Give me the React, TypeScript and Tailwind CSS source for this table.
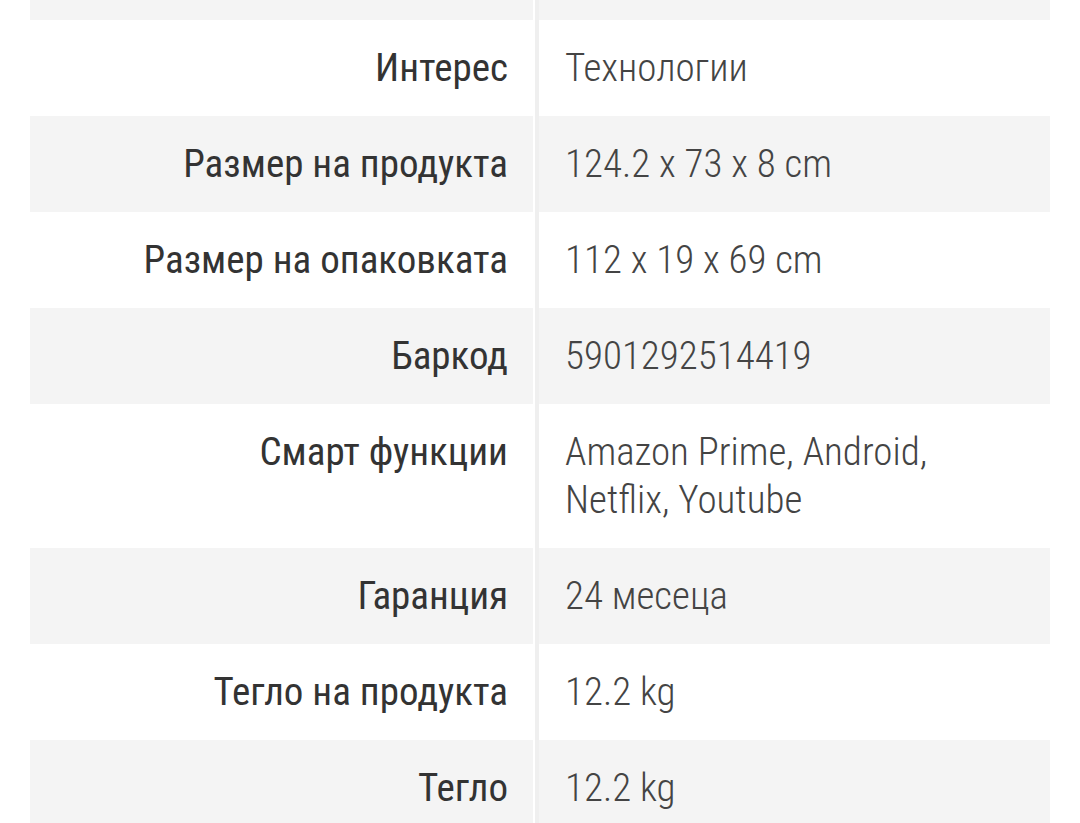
import React from "react";

type Spec = { label: string; value: string[] };

const specs: Spec[] = [
  { label: "Интерес", value: ["Технологии"] },
  { label: "Размер на продукта", value: ["124.2 x 73 x 8 cm"] },
  { label: "Размер на опаковката", value: ["112 x 19 x 69 cm"] },
  { label: "Баркод", value: ["5901292514419"] },
  { label: "Смарт функции", value: ["Amazon Prime, Android,", "Netflix, Youtube"] },
  { label: "Гаранция", value: ["24 месеца"] },
  { label: "Тегло на продукта", value: ["12.2 kg"] },
  { label: "Тегло", value: ["12.2 kg"] },
];

const SpecRow: React.FC<{ spec?: Spec; striped: boolean; top?: boolean }> = ({ spec, striped, top }) => {
  const bg = striped ? "bg-[#f4f4f4]" : "bg-white";
  return (
    <div className={`flex ${top ? "h-[20px]" : ""}`}>
      <div
        className={`w-[503px] shrink-0 ${bg} ${top ? "" : "py-[24px]"} pr-[25px] text-right font-normal text-[#333333]`}
      >
        {spec?.label}
      </div>
      <div className="w-[2px] shrink-0 bg-white" />
      <div className="w-[4px] shrink-0 bg-[#efefef]" />
      <div className={`flex-1 ${bg} ${top ? "" : "py-[24px]"} pl-[26px] font-light text-[#444444]`}>
        {spec?.value.map((line, i) => (
          <div key={i}>{line}</div>
        ))}
      </div>
    </div>
  );
};

export default function App() {
  return (
    <main
      className="min-h-screen bg-white px-[30px] text-[39px] leading-[48px]"
      style={{ fontFamily: '"Roboto Condensed", Roboto, "Noto Sans", sans-serif' }}
    >
      <section className="w-[1020px]">
        <SpecRow striped top />
        {specs.map((spec, index) => (
          <SpecRow key={spec.label} spec={spec} striped={index % 2 === 1} />
        ))}
      </section>
    </main>
  );
}
